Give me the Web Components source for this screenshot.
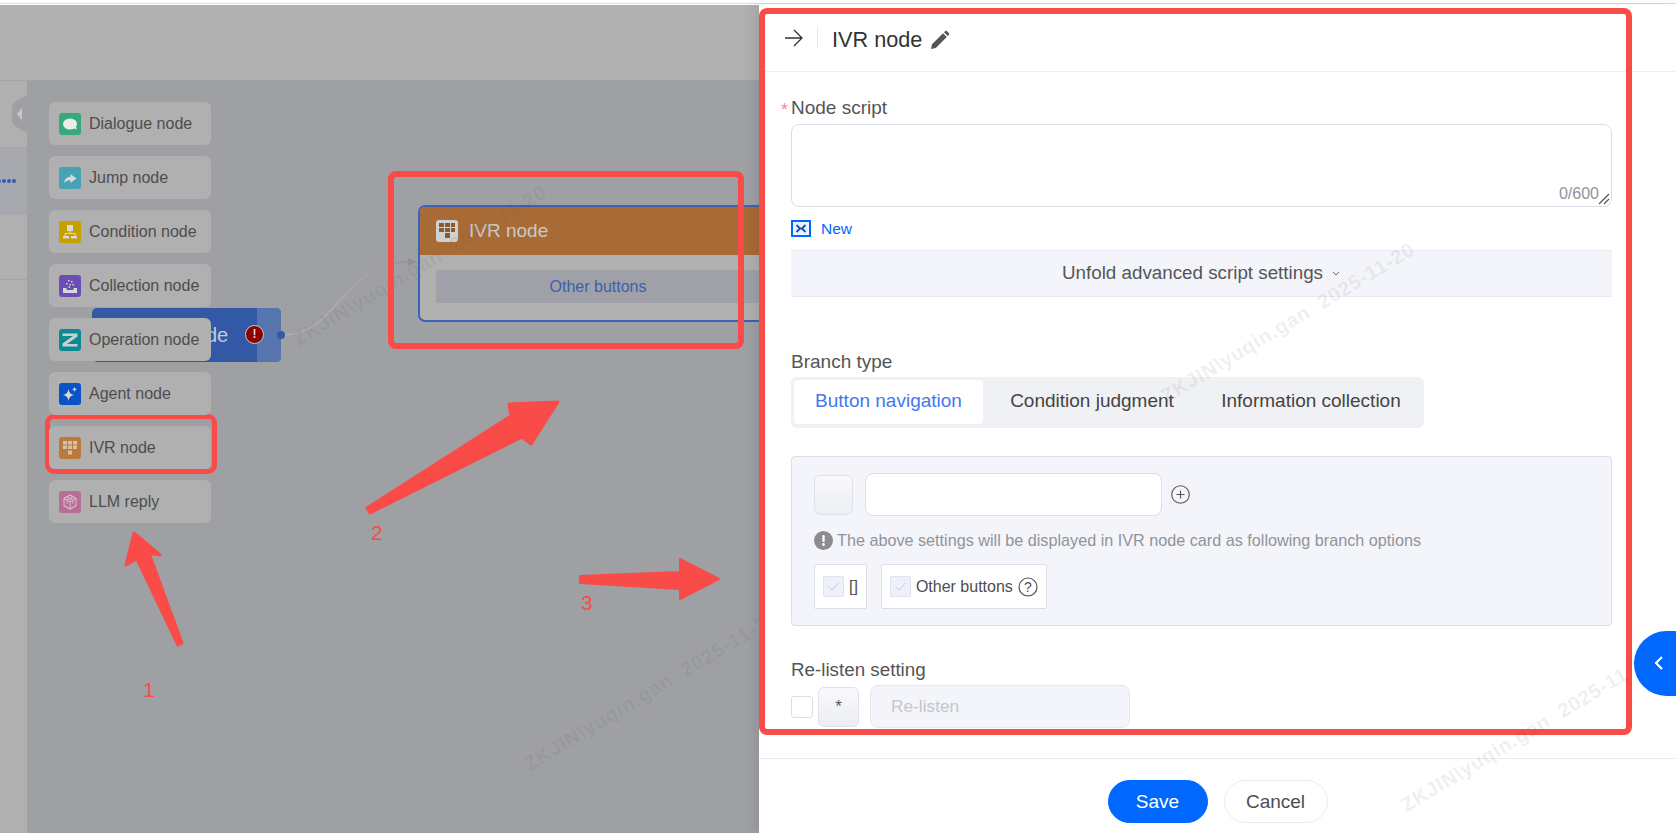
<!DOCTYPE html>
<html><head><meta charset="utf-8"><style>
html,body{margin:0;padding:0;height:100%;overflow:hidden;background:#fff;font-family:"Liberation Sans",Arial,sans-serif}
</style></head><body>
<app-shell>
  <side-rail slot="rail"></side-rail>
  <node-palette slot="canvas">
    <palette-item kind="dialogue" color="#36a97d">Dialogue node</palette-item>
    <palette-item kind="jump" color="#45a3b5">Jump node</palette-item>
    <palette-item kind="condition" color="#c5a100">Condition node</palette-item>
    <palette-item kind="collection" color="#6c4db5">Collection node</palette-item>
    <palette-item kind="operation" color="#0b8a94">Operation node</palette-item>
    <palette-item kind="agent" color="#0b52c6">Agent node</palette-item>
    <palette-item kind="ivr" color="#b87a3d">IVR node</palette-item>
    <palette-item kind="llm" color="#b96f95">LLM reply</palette-item>
  </node-palette>
  <flow-canvas slot="canvas"></flow-canvas>
  <ivr-drawer slot="drawer"></ivr-drawer>
  <annotation-layer slot="over"></annotation-layer>
</app-shell>
<script>
const ICONS={
 dialogue:'<ellipse cx="11" cy="11" rx="7" ry="5.500" fill="#ececec"/><path d="M14 15l4 1.600-1.200-3.600z" fill="#ececec"/>',
 jump:'<path d="M11.500 7l6 4.500-6 4.500v-2.800c-2.700 0-4.800.8-6.500 2.800.5-3.800 2.900-6 6.500-6.200z" fill="#d8d8d8"/>',
 condition:'<rect x="8" y="4" width="6" height="6" fill="#d8d8d8"/><path d="M11 10v2.500M6 15v-2.500h10V15" stroke="#d8d8d8" fill="none"/><rect x="4" y="15" width="6" height="2.500" fill="#d8d8d8"/><rect x="12" y="15" width="6" height="2.500" fill="#d8d8d8"/>',
 collection:'<path d="M4 13h3.500v2h7v-2H18v5H4z" fill="#d8d8d8"/><g fill="#d8d8d8"><rect x="9" y="5" width="1.500" height="1.500"/><rect x="12" y="6" width="1.500" height="1.500"/><rect x="7" y="8" width="1.500" height="1.500"/><rect x="10.500" y="9" width="1.500" height="1.500"/><rect x="13.500" y="9" width="1.500" height="1.500"/><rect x="9.500" y="11.500" width="1.500" height="1.500"/></g>',
 operation:'<path d="M3.500 4.500h15v3L8 15h10.500v2.500h-15v-3L14 7H3.500z" fill="#c8d0d0"/>',
 agent:'<path d="M9.500 6c.7 3.700 2.100 5.400 5.700 6-3.600.7-5 2.300-5.700 6-.7-3.700-2.100-5.300-5.700-6 3.600-.6 5-2.300 5.700-6z" fill="#d8d8d8"/><path d="M15.500 3.500c.3 1.800 1 2.500 2.700 2.800-1.700.3-2.400 1-2.700 2.800-.3-1.800-1-2.500-2.700-2.800 1.700-.3 2.400-1 2.700-2.800z" fill="#d8d8d8"/>',
 ivr:'<g fill="#d8c0a4"><rect x="4" y="4" width="4" height="3.500"/><rect x="9" y="4" width="4" height="3.500"/><rect x="14" y="4" width="4" height="3.500"/><rect x="4" y="8.500" width="4" height="3.500"/><rect x="9" y="8.500" width="4" height="3.500"/><rect x="14" y="8.500" width="4" height="3.500"/><rect x="9" y="13.500" width="4" height="4"/></g>',
 llm:'<path d="M11 4l6 3.400v7.200L11 18l-6-3.400V7.400zM5.500 7.700l5.500 3 5.500-3M11 10.700V17.500M8.200 6l5.600 3.100v3.300M13.800 6L8.200 9.100v3.300" stroke="#d8b9cb" fill="none" stroke-width="1.100"/>'
};
function def(name,css,html){
  customElements.define(name,class extends HTMLElement{
    connectedCallback(){
      if(this.shadowRoot)return;
      const r=this.attachShadow({mode:'open'});
      r.innerHTML='<style>'+css+'</style>'+(typeof html==='function'?html(this):html);
    }
  });
}
def('app-shell',`
 :host{display:block;width:1676px;height:833px;position:relative;overflow:hidden;background:#fff}
 .top{height:3px;background:#fff;border-bottom:1px solid #dcdcdc}
 .gap{height:1px;background:#fff}
 .head{height:75px;background:#b0b0b0;border-bottom:1px solid #a2a3a7}
 .body{display:flex;height:752px}
 .rail{width:27px;flex:none}
 .canvas{flex:1;background:#9fa0a4;position:relative;display:block;padding:21px 0 0 22px}
 .dr{position:absolute;left:759px;top:5px;bottom:0;right:0;display:block}
 .ov{position:absolute;inset:0;pointer-events:none;display:block}
`,`<div class="top"></div><div class="gap"></div><div class="head"></div>
 <div class="body"><div class="rail"><slot name="rail"></slot></div><div class="canvas"><slot name="canvas"></slot></div></div>
 <div class="dr"><slot name="drawer"></slot></div><div class="ov"><slot name="over"></slot></div>`);
def('side-rail',`
 :host{display:block;height:100%;background:#b0b0b0;position:relative;overflow:hidden}
 .r{border-bottom:1px solid #a2a3a7;box-sizing:border-box;position:relative}
 .a{height:67px}.b{height:66px;background:#a8a9ae}.c{height:66px}
 .dots{position:absolute;left:-3px;top:31px;display:flex;gap:1px}
 .dots i{width:4px;height:4px;border-radius:50%;background:#2f5cb8;display:block}
 .h{position:absolute;left:12px;top:14px}
`,`<div class="r a"></div><div class="r b"><div class="dots"><i></i><i></i><i></i><i></i></div></div><div class="r c"></div>
 <svg class="h" width="15" height="38" viewBox="0 0 15 38"><path d="M15 0L3 7Q0 9 0 12V26Q0 29 3 31L15 38z" fill="#9fa0a4"/><path d="M10 13L5 19l5 6z" fill="#c9c9c9"/></svg>`);
def('node-palette',`:host{display:flex;flex-direction:column;gap:11px;width:162px;position:relative;z-index:2}`,`<slot></slot>`);
def('palette-item',`
 :host{display:flex;align-items:center;gap:8px;height:43px;padding-left:10px;background:#b0b0b0;border-radius:6px;font-size:16px;color:#4d4d4f}
 svg{display:block;border-radius:3px;flex:none}
`,(h)=>`<svg width="22" height="22" viewBox="0 0 22 22" style="background:${h.getAttribute('color')}">${ICONS[h.getAttribute('kind')]}</svg><span><slot></slot></span>`);
def('flow-canvas',`
 :host{display:block;position:absolute;inset:0}
 .start{position:absolute;left:65px;top:227px;width:189px;height:54px;border-radius:5px;background:#3358a6;overflow:hidden;color:#c5cbd8;font-size:20px;line-height:54px;box-sizing:border-box;padding-left:114px}
 .start i{position:absolute;right:0;top:0;bottom:0;width:24px;background:#5675af}
 .alert{position:absolute;left:218px;top:244px;width:19px;height:19px;border-radius:50%;background:#8b0000;border:1.500px solid #c9c9c9;box-sizing:border-box;color:#ddd;font:bold 12px/16px "Liberation Sans",sans-serif;text-align:center}
 .dot{position:absolute;left:250px;top:250px;width:8px;height:8px;border-radius:50%;background:#3358a6}
 svg.wire{position:absolute;left:0;top:0}
 .ivr{position:absolute;left:391px;top:124px;width:420px;height:117px;border:2px solid #3a62b8;border-radius:7px;background:#b0b0b0;box-sizing:border-box;overflow:hidden}
 .ivr header{height:48px;background:#a96b36;display:flex;align-items:center;padding-left:16px;gap:11px;color:#c9c9c9;font-size:19px}
 .ivr header svg{background:#d0d0d0;border-radius:3px}
 .btn{margin:15px 0 0 16px;height:33px;width:382px;background:#a0a1a8;border-radius:2px;color:#3a5fb0;font-size:16px;line-height:33px;text-align:center;padding-right:58px;box-sizing:border-box}
 .wm{position:absolute;font:bold 20px "Liberation Sans",sans-serif;letter-spacing:.8px;color:rgba(80,80,80,.09);white-space:pre;transform:rotate(-31deg);transform-origin:0 0}
`,`<svg class="wire" width="480" height="300" viewBox="27 81 480 300"><defs><linearGradient id="g" gradientUnits="userSpaceOnUse" x1="282" y1="335" x2="416" y2="261"><stop offset="0" stop-color="#b5b5b5"/><stop offset=".6" stop-color="#a8a8a8"/><stop offset="1" stop-color="#8f9094"/></linearGradient></defs><path d="M282 335C340 335 340 262 414 261" fill="none" stroke="url(#g)" stroke-width="1.500"/><path d="M417 262l-9-4v8z" fill="#8f9094"/></svg>
 <div class="start">de<i></i></div><div class="alert">!</div><div class="dot"></div>
 <div class="ivr"><header><svg width="22" height="22" viewBox="0 0 22 22"><g fill="#8a5a30"><rect x="3" y="3" width="5" height="4"/><rect x="9" y="3" width="5" height="4"/><rect x="15" y="3" width="4" height="4"/><rect x="3" y="8" width="5" height="4"/><rect x="9" y="8" width="5" height="4"/><rect x="15" y="8" width="4" height="4"/><rect x="9" y="13" width="5" height="5"/></g></svg><span>IVR node</span></header><div class="btn">Other buttons</div></div>
 <div class="wm" style="left:262px;top:250px">ZKJIN\\yuqin.gan  2025-11-20</div>
 <div class="wm" style="left:493px;top:675px">ZKJIN\\yuqin.gan  2025-11-20</div>`);
def('ivr-drawer',`
 :host{display:flex;flex-direction:column;height:100%;background:#fff;box-shadow:-6px 0 10px rgba(0,0,0,.07);color:#4d4d4f;font-size:16px;position:relative}
 header{display:flex;align-items:center;height:67px;box-sizing:border-box;border-bottom:1px solid #eeeff3;padding:4px 0 0 25px;flex:none}
 header .arrow{margin-top:-4px}
 header .sep{width:1px;height:22px;background:#e6e7ec;margin:-4px 14px 0 13px}
 header .t{font-size:21.700px;color:#333;margin-right:8px}
 main{flex:1;padding:25px 64px 0 32px;min-height:0;overflow:hidden}
 footer{flex:none;height:75px;border-top:1px solid #ebecf1;display:flex;justify-content:center;gap:16px;padding-top:21px;box-sizing:border-box}
`,`<header>
  <svg class="arrow" width="20" height="20" viewBox="0 0 20 20"><path d="M1 10h17M10 2l8 8-8 8" fill="none" stroke="#333" stroke-width="1.300"/></svg>
  <span class="sep"></span><span class="t">IVR node</span>
  <svg width="20" height="20" viewBox="0 0 20 20"><path d="M1 19l1-4.800L13 3.200 16.800 7 5.800 18zM14 2.200l1.300-1.200c.5-.4 1-.4 1.400 0l2.300 2.300c.4.400.4 1 0 1.400L17.800 6z" fill="#555"/></svg>
 </header>
 <main>
  <script-field></script-field>
  <branch-type></branch-type>
  <branch-box></branch-box>
  <relisten-row></relisten-row>
 </main>
 <footer><pill-button primary>Save</pill-button><pill-button>Cancel</pill-button></footer>`);
def('script-field',`
 :host{display:block;position:relative}
 .l{display:block;height:27px;line-height:22px;font-size:19px;color:#555}
 .l b{position:absolute;left:-10px;top:2px;color:#f88;font-weight:normal;font-size:18px}
 .ta{height:83px;border:1px solid #dcdde6;border-radius:8px;box-sizing:border-box;position:relative}
 .c{position:absolute;right:12px;bottom:3px;font-size:16px;color:#909399}
 .g{position:absolute;right:1px;bottom:1px}
 .n{display:flex;align-items:center;gap:10px;margin-top:13px;color:#0068ff;font-size:15.500px;height:17px}
 .adv{margin-top:13px;height:47px;background:#f4f5fa;border:solid #e9ebf2;border-width:1px 0;box-sizing:border-box;display:flex;align-items:center;justify-content:center;gap:8px;font-size:18.800px;color:#555;padding-bottom:2px}
`,`<span class="l"><b>*</b>Node script</span>
 <div class="ta"><span class="c">0/600</span><svg class="g" width="12" height="12" viewBox="0 0 12 12"><path d="M1 11L11 1M6 11l5-5" stroke="#555" stroke-width="1.200"/></svg></div>
 <div class="n"><svg width="20" height="17" viewBox="0 0 20 17"><rect x="1" y="1" width="18" height="15" fill="#eef4ff" stroke="#0068ff" stroke-width="2"/><path d="M5.500 5l3.500 3.500L5.500 12M14.500 5L11 8.500l3.500 3.500M8 8.500h4" stroke="#0b4fb8" stroke-width="1.800" fill="none"/></svg>New</div>
 <div class="adv">Unfold advanced script settings <svg width="10" height="10" viewBox="0 0 10 10"><path d="M2 4l3 3 3-3" fill="none" stroke="#666"/></svg></div>`);
def('branch-type',`
 :host{display:block;margin-top:55px}
 .l{font-size:19px;color:#555;line-height:20px;height:25px}
 .tabs{display:flex;height:51px;width:633px;background:#f0f1f5;border-radius:6px;box-sizing:border-box;padding:3px 3px 4px;font-size:19px;color:#444;align-items:center}
 .tabs span{text-align:center;line-height:41px;padding-bottom:3px;white-space:nowrap}
 .a{width:189px;background:#fff;color:#4478ee;border-radius:4px}
 .b{width:218px}.d{width:220px}
`,`<div class="l">Branch type</div><div class="tabs"><span class="a">Button navigation</span><span class="b">Condition judgment</span><span class="d">Information collection</span></div>`);
def('branch-box',`
 :host{display:block;margin-top:28px;height:170px;border:1px solid #dcdde6;border-radius:4px;background:#f4f5fa;box-sizing:border-box;padding:16px 22px 0;font-size:15px}
 .r{display:flex;align-items:center;gap:12px;height:43px}
 .k{width:39px;height:40px;border:1px solid #e1e2e9;border-radius:6px;box-sizing:border-box;background:linear-gradient(#f9f9fb,#eceef5)}
 .i{width:297px;height:43px;background:#fff;border:1px solid #dcdde6;border-radius:8px;box-sizing:border-box}
 .p{margin-left:-3px;display:block}
 .h{display:flex;align-items:center;gap:4px;margin-top:14px;height:20px;color:#909399;font-size:16.200px;white-space:nowrap}
 .cs{display:flex;gap:14px;margin-top:14px}
 .c{display:flex;align-items:center;height:45px;border:1px solid #dcdde6;background:#fff;box-sizing:border-box;padding:0 8px;gap:5px;border-radius:2px;color:#4d4d4f;font-size:16px}
 .x{width:21px;height:21px;background:#eef1fa;border:1px solid #dfe3ef;box-sizing:border-box;display:block;border-radius:1px}
`,`<div class="r"><div class="k"></div><div class="i"></div><svg class="p" width="19" height="19" viewBox="0 0 19 19"><circle cx="9.500" cy="9.500" r="8.800" fill="none" stroke="#555" stroke-width="1.100"/><path d="M5.500 9.500h8M9.500 5.500v8" stroke="#555" stroke-width="1.100"/></svg></div>
 <div class="h"><svg width="19" height="19" viewBox="0 0 19 19"><circle cx="9.500" cy="9.500" r="9.500" fill="#8b8c92"/><rect x="8.300" y="4" width="2.400" height="7" rx="1" fill="#fff"/><circle cx="9.500" cy="13.500" r="1.400" fill="#fff"/></svg><span>The above settings will be displayed in IVR node card as following branch options</span></div>
 <div class="cs"><div class="c"><svg class="x" viewBox="0 0 21 21"><path d="M5 10.500l4 4 7-8" fill="none" stroke="#c5c8d0"/></svg>[]</div><div class="c"><svg class="x" viewBox="0 0 21 21"><path d="M5 10.500l4 4 7-8" fill="none" stroke="#c5c8d0"/></svg>Other buttons<svg width="20" height="20" viewBox="0 0 20 20"><circle cx="10" cy="10" r="9" fill="none" stroke="#555" stroke-width="1.200"/><text x="10" y="15" text-anchor="middle" font-size="14" font-family="Liberation Sans" fill="#555">?</text></svg></div></div>`);
def('relisten-row',`
 :host{display:block;margin-top:34px}
 .l{font-size:18.800px;color:#555;line-height:20px;height:25px}
 .r{display:flex;align-items:center;gap:5px;height:43px}
 .b{width:22px;height:22px;background:#fff;border:1px solid #dcdde6;border-radius:3px;box-sizing:border-box}
 .s{width:41px;height:40px;border:1px solid #e1e2e9;border-radius:6px;box-sizing:border-box;background:linear-gradient(#f9f9fb,#eceef5);text-align:center;line-height:38px;font-size:17px;color:#555}
 .i{width:260px;height:43px;margin-left:6px;background:#f4f5fa;border:1px solid #e6e8ef;border-radius:8px;box-sizing:border-box;padding-left:20px;line-height:41px;color:#c4c6cc;font-size:17.300px}
`,`<div class="l">Re-listen setting</div><div class="r"><div class="b"></div><div class="s">*</div><div class="i">Re-listen</div></div>`);
def('pill-button',`
 :host{display:block;height:43px;border-radius:22px;text-align:center;line-height:41px;font-size:19px;box-sizing:border-box;width:104px;border:1px solid #ebecf0;color:#4d4d4f;background:#fff}
 :host([primary]){width:100px;background:#0068ff;border-color:#0068ff;color:#fff}
`,`<slot></slot>`);
def('annotation-layer',`
 :host{display:block;position:absolute;inset:0}
 svg{position:absolute;left:0;top:0}
 .n{position:absolute;color:#f94c48;font-size:21px;line-height:24px}
 .b{position:absolute;border:solid #f94c48;box-sizing:border-box}
 .tab{position:absolute;left:1634px;top:631px;width:42px;height:65px;background:#0068ff;border-radius:33px 0 0 33px}
 .tab svg{left:19px;top:24px}
 .wm{position:absolute;font:bold 20px "Liberation Sans",sans-serif;letter-spacing:.8px;color:rgba(90,90,90,.10);white-space:pre;transform:rotate(-31deg);transform-origin:0 0}
`,`<svg width="1676" height="833" viewBox="0 0 1676 833" fill="#f94c48" stroke-linejoin="round">
   <path d="M178 645L137 559 126 565 134 533 160 555 149 553 182 643z" stroke="#f94c48" stroke-width="3"/>
   <path d="M367 508L511 416 509 404 558 402 531 444 522 437 370 513z" stroke="#f94c48" stroke-width="3"/>
   <path d="M580 576L680 572V559L719 579 680 599V589L580 583z" stroke="#f94c48" stroke-width="2"/>
 </svg>
 <div class="b" style="left:45px;top:414px;width:172px;height:60px;border-width:5px;border-radius:9px"></div>
 <div class="b" style="left:388px;top:171px;width:356px;height:178px;border-width:6px;border-radius:8px"></div>
 <div class="b" style="left:759px;top:8px;width:873px;height:727px;border-width:6px;border-radius:8px"></div>
 <span class="n" style="left:143px;top:678px">1</span><span class="n" style="left:371px;top:521px">2</span><span class="n" style="left:581px;top:591px">3</span>
 <div class="tab"><svg width="12" height="16" viewBox="0 0 12 16"><path d="M9 2L3 8l6 6" fill="none" stroke="#fff" stroke-width="2.200"/></svg></div>
 <div class="wm" style="left:1157px;top:388px">ZKJIN\\yuqin.gan  2025-11-20</div>
 <div class="wm" style="left:1397px;top:797px">ZKJIN\\yuqin.gan  2025-11-20</div>`);
</script>
</body></html>
